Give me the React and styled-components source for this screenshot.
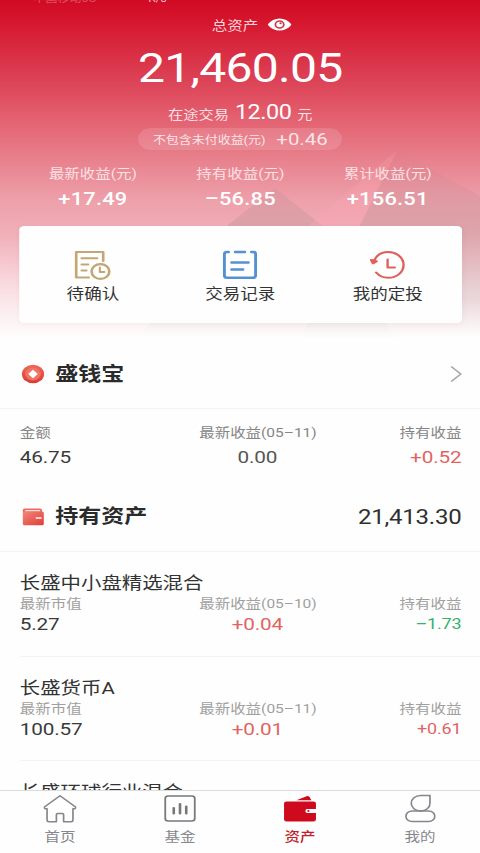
import React from 'react';
import styled, { createGlobalStyle } from 'styled-components';

const GlobalStyle = createGlobalStyle`
  * {
    box-sizing: border-box;
  }
  body {
    margin: 0;
    overflow: hidden;
    background: #fefefe;
  }
`;

// 400px wide layout, widened to fill the 480px screen
const Screen = styled.div`
  display: flex;
  flex-direction: column;
  width: 400px;
  height: 853px;
  overflow: hidden;
  background: #fefefe;
  color: #333;
  font-family: Roboto, 'Noto Sans CJK SC', sans-serif;
  white-space: nowrap;
  transform: scaleX(1.2);
  transform-origin: 0 0;
`;

const Content = styled.main`
  height: 790px;
  overflow: hidden;
`;

const Hero = styled.header`
  position: relative;
  height: 340px;
  padding: 0 15.5px 0 16px;
  background: linear-gradient(#d20a24 0, #d6182f 24px, #dc4256 80px, #e25a6a 110px, #eda0aa 200px, #f1b0b9 235px, #fadfe3 290px, #fefefe 338px);
  color: #fff;
`;

const Mountains = styled.svg`
  position: absolute;
  top: 0;
  left: 0;
`;

const HeroBody = styled.div`
  position: relative;
  display: flex;
  flex-direction: column;
`;

const StatusBar = styled.div`
  display: flex;
  align-items: flex-end;
  gap: 43px;
  height: 4px;
  padding-left: 12px;
  overflow: hidden;
  font-size: 10px;
  line-height: 10px;
  color: #f3b9c0;
`;

const Carrier = styled.span`
  opacity: 0.4;
`;

const TotalLabel = styled.div`
  display: flex;
  align-items: center;
  gap: 8px;
  height: 40px;
  padding-left: 160.5px;
  font-size: 12.9px;
  color: #f9d3d7;
`;

const Total = styled.div`
  height: 48px;
  font-size: 40px;
  letter-spacing: -0.6px;
  line-height: 49px;
  text-align: center;
`;

const Transit = styled.div`
  display: flex;
  align-items: baseline;
  justify-content: center;
  gap: 5px;
  height: 36px;
  font-size: 12.7px;
  line-height: 41px;
  color: #fadfe2;
`;

const TransitValue = styled.span`
  font-size: 19.5px;
  letter-spacing: -0.4px;
  color: #fff;
`;

const Pill = styled.div`
  display: flex;
  align-items: center;
  align-self: center;
  justify-content: center;
  gap: 9px;
  width: 170px;
  height: 22px;
  border-radius: 11px;
  background: rgba(255, 255, 255, 0.13);
  font-size: 10.8px;
  color: #fbe3e5;
`;

const PillValue = styled.span`
  font-size: 17px;
`;

const Thirds = styled.div`
  display: grid;
  grid-template-columns: repeat(3, 1fr);
`;

const Summary = styled(Thirds)`
  height: 76px;
  padding-top: 12px;
  text-align: center;
`;

const SummaryLabel = styled.div`
  height: 24px;
  font-size: 12.9px;
  line-height: 24px;
  color: #fbe0e3;
`;

const SummaryValue = styled.div`
  height: 24px;
  font-size: 18.2px;
  font-weight: 500;
  letter-spacing: 0.2px;
  line-height: 26px;
`;

const Card = styled(Thirds)`
  height: 97px;
  border-radius: 4px;
  background: #fefefe;
  box-shadow: 0 1px 5px rgba(120, 60, 60, 0.06);
`;

const Action = styled.div`
  display: flex;
  flex-direction: column;
  align-items: center;
  padding-top: 23px;
  gap: 1px;
  color: #333;
  font-size: 14.6px;
  line-height: 24px;
`;

const SectionHead = styled.div`
  display: flex;
  align-items: center;
  height: ${(props) => props.$height}px;
  padding: 0 15.5px 0 18px;
  border-bottom: 1px solid #f4f4f4;
`;

const SectionTitle = styled.h2`
  flex: 1;
  margin: 1px 0 0 9px;
  font-size: 19.2px;
  font-weight: 700;
  line-height: 28px;
  color: #2b2b2b;
`;

const SectionValue = styled.span`
  margin-top: 1px;
  font-size: 20px;
  letter-spacing: -0.2px;
  color: #2f2f2f;
`;

const Holding = styled.div`
  height: ${(props) => props.$height}px;
  margin-left: 16.5px;
  padding-right: 15.5px;
  padding-top: ${(props) => props.$top}px;
  border-bottom: ${(props) => (props.$line ? '1px solid #f2f2f2' : '0')};
`;

const FundName = styled.div`
  height: 21px;
  font-size: 17px;
  line-height: 22px;
`;

const Columns = styled.div`
  display: grid;
  grid-template-columns: 149.5px 97px 1fr;
  text-align: center;

  > :first-child {
    text-align: left;
  }
  > :last-child {
    text-align: right;
  }
`;

const Label = styled.div`
  font-size: 12.9px;
  line-height: ${(props) => props.$line}px;
  color: ${(props) => props.$color};
`;

const tones = { dark: '#3a3a3a', flat: '#555', up: '#e0645e', down: '#35b365' };

const Value = styled.div`
  font-size: ${(props) => (props.$small ? 15 : 17.3)}px;
  letter-spacing: -0.15px;
  line-height: ${(props) => props.$line}px;
  color: ${(props) => tones[props.$tone]};
`;

const TabBar = styled.nav`
  display: grid;
  grid-template-columns: repeat(4, 1fr);
  height: 63px;
  border-top: 1px solid #dcdcdc;
  background: #fefefe;
`;

const Tab = styled.div`
  display: flex;
  flex-direction: column;
  align-items: center;
  padding-top: 3px;
  font-size: 12.9px;
  font-weight: ${(props) => (props.$active ? 500 : 400)};
  line-height: 25px;
  color: ${(props) => (props.$active ? '#c21f30' : '#86878c')};
`;

const EyeIcon = () => (
  <svg width="20" height="13" viewBox="0 0 20 13">
    <path d="M0 6.500C5-1.600 15-1.600 20 6.500C15 14.600 5 14.600 0 6.500Z" fill="#fff" />
    <circle cx="10" cy="6.500" r="3.500" fill="none" stroke="#cf3a4c" strokeWidth="1.500" />
    <circle cx="10.800" cy="5.300" r="1" fill="#cf3a4c" />
  </svg>
);

const PendingIcon = () => (
  <svg width="32" height="32" viewBox="0 0 32 32" fill="none" stroke="#c3a673" strokeWidth="2.200" strokeLinecap="round" strokeLinejoin="round">
    <path d="M25 12V3H2.500V28.500H13" />
    <path d="M7 9.200H20M7 15.500H12.500M7 21.500H11" strokeWidth="1.900" />
    <circle cx="22.700" cy="22.500" r="7.400" />
    <path d="M22.200 18.500V23H26" strokeWidth="1.800" />
  </svg>
);

const RecordIcon = () => (
  <svg width="30" height="32" viewBox="0 0 30 32" fill="none" stroke="#5590d2" strokeWidth="2.400" strokeLinecap="round">
    <path d="M5.500 3H4C2.500 3 2 3.800 2 5V26.500C2 28 2.800 28.800 4.200 28.800H25.800C27.200 28.800 28 28 28 26.500V5C28 3.800 27.500 3 26 3H24.500M11 3H19" />
    <path d="M8 13.500H22M8 20.500H17.500" />
  </svg>
);

const PlanIcon = () => (
  <svg width="30" height="32" viewBox="0 0 30 32" fill="none" stroke="#e0615a" strokeWidth="2" strokeLinecap="round" strokeLinejoin="round">
    <path d="M4 11C6 6.300 10.300 3 15.500 3C22.500 3 28.300 8.800 28.300 16C28.300 23.200 22.500 28.800 15.500 28.800C11.500 28.800 8 27 5.500 23.500" />
    <path d="M1.200 11L2.800 14.300L5.800 12.300Z" fill="#e0615a" />
    <path d="M15 10.500V18.500H21" />
  </svg>
);

const CoinIcon = () => (
  <svg width="19" height="20" viewBox="0 0 19 20">
    <defs>
      <linearGradient id="coin" x1="0" y1="0" x2="0" y2="1">
        <stop offset="0" stopColor="#f0685a" />
        <stop offset="1" stopColor="#d93b30" />
      </linearGradient>
    </defs>
    <circle cx="9.500" cy="10" r="9.300" fill="url(#coin)" />
    <circle cx="9.500" cy="10" r="6.500" fill="#ee7565" />
    <path d="M9.500 5.800L13.500 10L9.500 14.200L5.500 10Z" fill="#fff" />
  </svg>
);

const WalletIcon = () => (
  <svg width="19" height="18" viewBox="0 0 19 18">
    <defs>
      <linearGradient id="wallet" x1="0" y1="0" x2="1" y2="1">
        <stop offset="0" stopColor="#f4867a" />
        <stop offset="1" stopColor="#df3d35" />
      </linearGradient>
    </defs>
    <path d="M2.500 .5H15.500Q17 .5 17 2V5H1V2Q1 .5 2.500 .5Z" fill="#ec6a5f" />
    <path d="M3 2H15.500V3.500H3Z" fill="#fbd9d4" />
    <rect x="1" y="3.500" width="17.500" height="13.800" rx="1.500" fill="url(#wallet)" />
    <path d="M12.500 10H16" stroke="#fff" strokeWidth="1.700" strokeLinecap="round" />
  </svg>
);

const ChevronIcon = () => (
  <svg width="10" height="18" viewBox="0 0 10 18" fill="none" stroke="#a3a3a3" strokeWidth="1.300">
    <path d="M1 1.500L9 9L1 16.500" />
  </svg>
);

const HomeIcon = () => (
  <svg width="28" height="30" viewBox="0 0 28 30" fill="none" stroke="#85868b" strokeWidth="1.400" strokeLinejoin="round">
    <path d="M14 1.800L1 13Q.5 15 3.200 14.800V26Q3.200 27.800 5 27.800H11V20.500Q11 19.500 12 19.500H16Q17 19.500 17 20.500V27.800H23Q24.800 27.800 24.800 26V14.800Q27.500 15 27 13Z" />
  </svg>
);

const FundIcon = () => (
  <svg width="28" height="30" viewBox="0 0 28 30" fill="none" stroke="#77787c">
    <rect x="1.700" y="2" width="24.600" height="25" rx="2.500" strokeWidth="1.500" />
    <path d="M8.800 14V19.500M14 10V19.500M19.200 12.500V19.500" strokeWidth="2.200" strokeLinecap="round" />
  </svg>
);

const AssetIcon = () => (
  <svg width="28" height="30" viewBox="0 0 28 30" fill="#cf0a1c">
    <path d="M11 6.200L19.500 2.200Q21 1.700 22 3L23.500 6.200Z" />
    <path d="M3 7.500H25Q27.300 7.500 27.300 9.500V15H20Q18.500 15 18.500 17Q18.500 19 20 19H27.300V25Q27.300 27.500 25 27.500H3Q.7 27.500 .7 25V9.500Q.7 7.500 3 7.500Z" />
    <circle cx="21" cy="17" r=".9" />
  </svg>
);

const MineIcon = () => (
  <svg width="28" height="30" viewBox="0 0 28 30" fill="none" stroke="#85868b" strokeWidth="1.400">
    <path d="M14.500 1.500H22.300V9.500C22.300 13.800 19 17 14.500 17C10 17 6.700 13.500 6.700 9.300C6.700 5 10 1.500 14.500 1.500Z" />
    <rect x="2.300" y="17" width="24" height="10.500" rx="5" />
  </svg>
);

const summary = [
  { label: '最新收益(元)', value: '+17.49' },
  { label: '持有收益(元)', value: '–56.85' },
  { label: '累计收益(元)', value: '+156.51' },
];

const actions = [
  { label: '待确认', Icon: PendingIcon },
  { label: '交易记录', Icon: RecordIcon },
  { label: '我的定投', Icon: PlanIcon },
];

const funds = [
  { name: '长盛中小盘精选混合', value: '5.27', date: '05–10', latest: '+0.04', held: '–1.73', tone: 'down' },
  { name: '长盛货币A', value: '100.57', date: '05–11', latest: '+0.01', held: '+0.61', tone: 'up' },
];

const tabs = [
  { label: '首页', Icon: HomeIcon },
  { label: '基金', Icon: FundIcon },
  { label: '资产', Icon: AssetIcon, active: true },
  { label: '我的', Icon: MineIcon },
];

function App() {
  return (
    <>
      <GlobalStyle />
      <Screen>
        <Content>
          <Hero>
            <Mountains width="400" height="340" viewBox="0 0 400 340">
              <defs>
                <linearGradient id="slope" gradientUnits="userSpaceOnUse" x1="0" y1="150" x2="0" y2="338">
                  <stop offset="0" stopColor="#b08088" stopOpacity="0.03" />
                  <stop offset="0.4" stopColor="#b08a8e" stopOpacity="0.3" />
                  <stop offset="0.8" stopColor="#b0a8a8" stopOpacity="0.22" />
                  <stop offset="1" stopColor="#ccc" stopOpacity="0" />
                </linearGradient>
                <linearGradient id="beam" gradientUnits="userSpaceOnUse" x1="0" y1="150" x2="0" y2="235">
                  <stop offset="0" stopColor="#f6a0ae" stopOpacity="0.2" />
                  <stop offset="1" stopColor="#f6a6b2" stopOpacity="0.6" />
                </linearGradient>
              </defs>
              <path d="M229 188L268 225L330 338H115L190 225Z" fill="url(#slope)" />
              <path d="M331 150L257 226L268 238H295Z" fill="url(#beam)" />
              <path d="M331 150L400 196V338H250L300 225Z" fill="url(#slope)" />
            </Mountains>
            <HeroBody>
              <StatusBar>
                <Carrier>中国移动5G</Carrier>
                <span>K/s</span>
              </StatusBar>
              <TotalLabel>
                总资产
                <EyeIcon />
              </TotalLabel>
              <Total>21,460.05</Total>
              <Transit>
                在途交易<TransitValue>12.00</TransitValue>元
              </Transit>
              <Pill>
                不包含未付收益(元)<PillValue>+0.46</PillValue>
              </Pill>
              <Summary>
                {summary.map((item) => (
                  <div key={item.label}>
                    <SummaryLabel>{item.label}</SummaryLabel>
                    <SummaryValue>{item.value}</SummaryValue>
                  </div>
                ))}
              </Summary>
              <Card>
                {actions.map(({ label, Icon }) => (
                  <Action key={label}>
                    <Icon />
                    {label}
                  </Action>
                ))}
              </Card>
            </HeroBody>
          </Hero>

          <SectionHead $height={69}>
            <CoinIcon />
            <SectionTitle>盛钱宝</SectionTitle>
            <ChevronIcon />
          </SectionHead>
          <Holding $height={73} $top={12}>
            <Columns>
              <Label $line={24} $color="#858585">金额</Label>
              <Label $line={24} $color="#858585">最新收益(05–11)</Label>
              <Label $line={24} $color="#858585">持有收益</Label>
            </Columns>
            <Columns>
              <Value $line={24} $tone="dark">46.75</Value>
              <Value $line={24} $tone="flat">0.00</Value>
              <Value $line={24} $tone="up">+0.52</Value>
            </Columns>
          </Holding>

          <SectionHead $height={70}>
            <WalletIcon />
            <SectionTitle>持有资产</SectionTitle>
            <SectionValue>21,413.30</SectionValue>
          </SectionHead>
          {funds.map((fund) => (
            <Holding key={fund.name} $height={104.5} $top={20} $line>
              <FundName>{fund.name}</FundName>
              <Columns>
                <Label $line={21} $color="#a0a0a0">最新市值</Label>
                <Label $line={21} $color="#a0a0a0">最新收益({fund.date})</Label>
                <Label $line={21} $color="#a0a0a0">持有收益</Label>
              </Columns>
              <Columns>
                <Value $line={21} $tone="dark">{fund.value}</Value>
                <Value $line={21} $tone="up">{fund.latest}</Value>
                <Value $line={21} $tone={fund.tone} $small>{fund.held}</Value>
              </Columns>
            </Holding>
          ))}
          <Holding $height={104} $top={20}>
            <FundName>长盛环球行业混合</FundName>
          </Holding>
        </Content>

        <TabBar>
          {tabs.map(({ label, Icon, active }) => (
            <Tab key={label} $active={active}>
              <Icon />
              {label}
            </Tab>
          ))}
        </TabBar>
      </Screen>
    </>
  );
}

export default App;
